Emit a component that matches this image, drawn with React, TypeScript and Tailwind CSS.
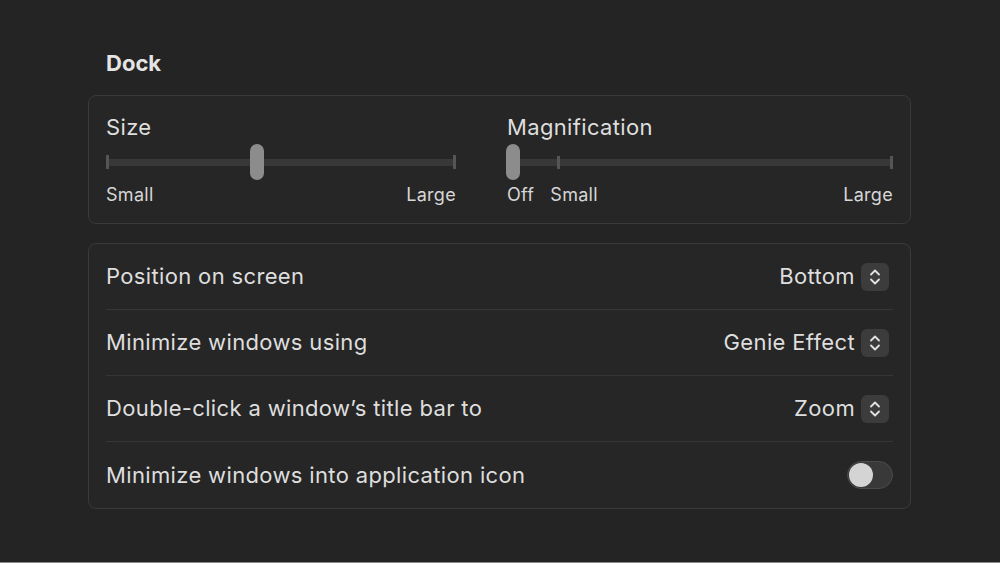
import React from 'react';

const font = { fontFamily: 'Inter, "Liberation Sans", sans-serif' };

function Stepper() {
  return (
    <div className="w-[28px] h-[28px] rounded-[6px] bg-[#3c3c3c] flex items-center justify-center">
      <svg width="12" height="18" viewBox="0 0 12 18" fill="none" stroke="#e2e2e2" strokeWidth="1.8" strokeLinecap="round" strokeLinejoin="round">
        <path d="M2 6.5 L6 2.5 L10 6.5" />
        <path d="M2 11.5 L6 15.5 L10 11.5" />
      </svg>
    </div>
  );
}

function Row({ label, value, last }: { label: string; value?: string; last?: boolean }) {
  return (
    <div className={`h-[66px] flex items-center justify-between ${last ? '' : 'border-b border-[#363636]'}`}>
      <span className="text-[22px] tracking-[0.35px] text-[#dedede]">{label}</span>
      {value ? (
        <div className="flex items-center gap-[6px] mr-[4px]">
          <span className="text-[22px] tracking-[0.35px] text-[#dedede]">{value}</span>
          <Stepper />
        </div>
      ) : (
        <div className="w-[46px] h-[28px] rounded-full bg-[#393939] border border-[#4a4a4a] flex items-center px-[1px]">
          <div className="w-[24px] h-[24px] rounded-full bg-[#d4d4d4]" />
        </div>
      )}
    </div>
  );
}

export default function App() {
  return (
    <div className="w-[1000px] h-[563px] bg-[#242424] border-b border-[#8a8a8a] overflow-hidden" style={font}>
      <div className="ml-[88px] w-[823px] pt-[50px]">
        <h2 className="pl-[18px] text-[22px] leading-[26px] font-bold text-[#e4e4e4]">Dock</h2>

        <div className="mt-[19px] h-[129px] rounded-[8px] border border-[#3a3a3a] bg-[#262626] px-[17px] pt-[18px] flex gap-[51px]">
          <div className="w-[350px] flex flex-col">
            <span className="text-[22px] leading-[26px] tracking-[0.35px] text-[#dedede]">Size</span>
            <div className="relative h-[36px] mt-[4px] flex items-center">
              <div className="w-full h-[7px] bg-[#383838] rounded-[1px] flex items-center justify-between">
                <div className="w-[3px] h-[14px] bg-[#555]" />
                <div className="w-[3px] h-[14px] bg-[#555]" />
              </div>
              <div className="absolute left-[144px] top-0 w-[14px] h-[36px] rounded-full bg-[#8c8c8c]" />
            </div>
            <div className="mt-[5px] flex justify-between text-[18px] leading-[20px] tracking-[0.3px] text-[#d6d6d6]">
              <span>Small</span>
              <span>Large</span>
            </div>
          </div>

          <div className="w-[386px] flex flex-col">
            <span className="text-[22px] leading-[26px] tracking-[0.35px] text-[#dedede]">Magnification</span>
            <div className="relative h-[36px] mt-[4px] flex items-center">
              <div className="ml-[7px] flex-1 h-[7px] bg-[#383838] rounded-[1px] relative">
                <div className="absolute left-[43px] top-[-3px] w-[3px] h-[13px] bg-[#555]" />
                <div className="absolute right-0 top-[-3px] w-[3px] h-[13px] bg-[#555]" />
              </div>
              <div className="absolute left-[-1px] top-0 w-[14px] h-[36px] rounded-full bg-[#8c8c8c]" />
            </div>
            <div className="mt-[5px] flex text-[18px] leading-[20px] tracking-[0.3px] text-[#d6d6d6]">
              <span>Off</span>
              <span className="ml-[16px]">Small</span>
              <span className="ml-auto">Large</span>
            </div>
          </div>
        </div>

        <div className="mt-[19px] rounded-[8px] border border-[#3a3a3a] bg-[#262626] px-[17px]">
          <Row label="Position on screen" value="Bottom" />
          <Row label="Minimize windows using" value="Genie Effect" />
          <Row label="Double-click a window’s title bar to" value="Zoom" />
          <Row label="Minimize windows into application icon" last />
        </div>
      </div>
    </div>
  );
}
